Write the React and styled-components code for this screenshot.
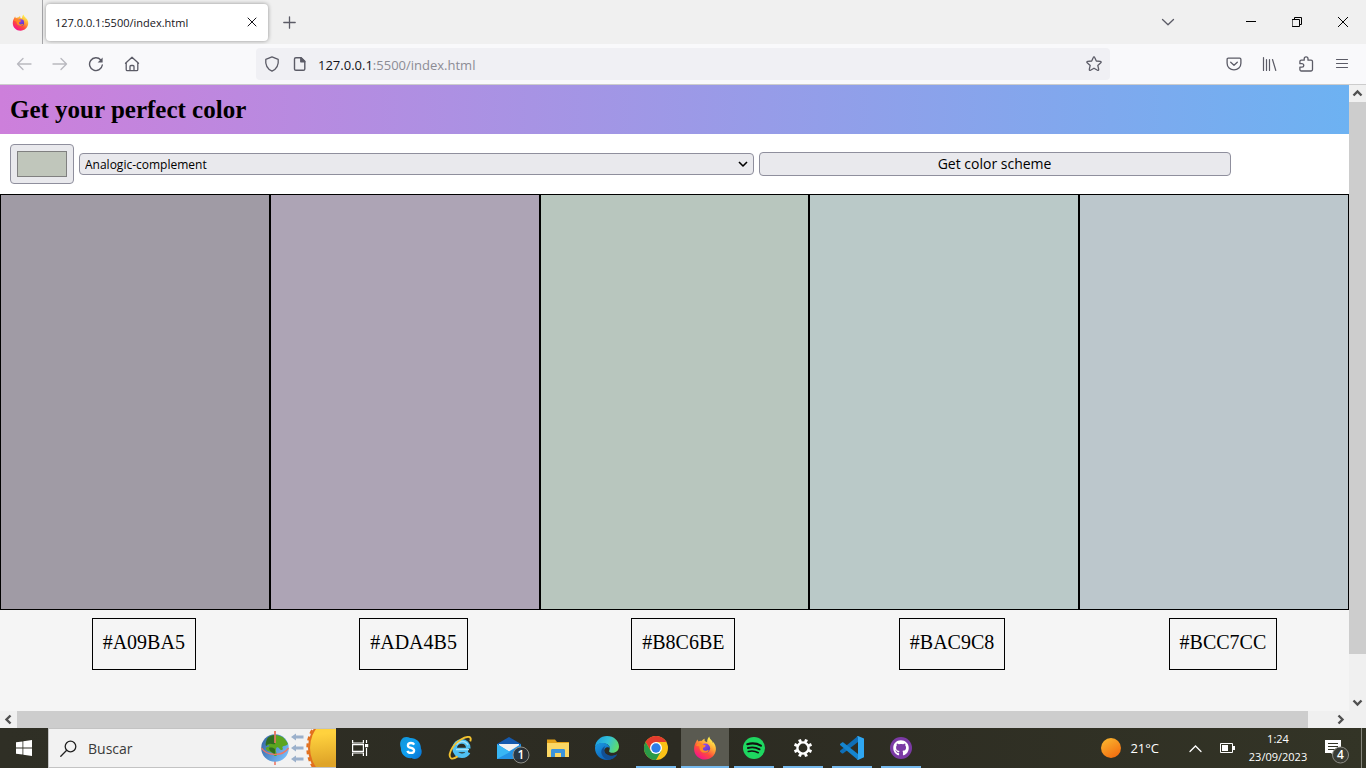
import React, { useState } from "react";
import styled, { createGlobalStyle } from "styled-components";
import { FaGithub } from "react-icons/fa";

const GlobalStyle = createGlobalStyle`
  * { box-sizing: border-box; }
  body { margin: 0; font-family: "Open Sans", "Noto Sans", sans-serif; color: #15141a; }
  button, input, select { font: inherit; color: inherit; margin: 0; }
  button { border: 0; padding: 0; background: none; }
  svg { display: block; flex: none; }
`;

const Screen = styled.div`
  min-height: 100vh;
  display: flex;
  flex-direction: column;
`;

/* ---------- browser window ---------- */

const TabStrip = styled.div`
  height: 44px;
  display: flex;
  align-items: center;
  background: #f0f0f0;
`;

const PinnedTab = styled.button`
  width: 43px;
  height: 44px;
  display: grid;
  place-items: center;
  padding-right: 2px;
  border-right: 1px solid #a5a5a8;
`;

const Tab = styled.div`
  width: 222px;
  height: 37px;
  margin: 0 3px;
  padding: 0 8px 0 9px;
  display: flex;
  align-items: center;
  justify-content: space-between;
  border-radius: 4px;
  background: #fff;
  box-shadow: 0 0 4px rgba(0, 0, 0, 0.4);
  font-size: 11px;
`;

const IconButton = styled.button`
  width: ${(p) => p.$w || 36}px;
  height: ${(p) => p.$h || 32}px;
  display: grid;
  place-items: center;
  color: ${(p) => p.$color || "#5b5b66"};
  opacity: ${(p) => (p.disabled ? 0.4 : 1)};
`;

const WindowButtons = styled.div`
  margin-left: auto;
  display: flex;
  align-items: center;
`;

const Gap = styled.div`
  width: 42px;
`;

const Toolbar = styled.nav`
  height: 41px;
  padding: 0 6px;
  display: flex;
  align-items: center;
  background: #f9f9fb;
  border-bottom: 1px solid #ccc;
`;

const ButtonGroup = styled.div`
  display: flex;
`;

const AddressBar = styled.div`
  flex: 1;
  height: 32px;
  margin: 0 106px;
  display: flex;
  align-items: center;
  border-radius: 4px;
  background: #f0f0f4;
`;

const Address = styled.div`
  flex: 1;
  margin-left: 6px;
  padding-top: 2px;
  font-size: 13px;
  color: #8c8c94;
  b { font-weight: 400; color: #15141a; }
`;

const Viewport = styled.div`
  flex: 1;
  display: grid;
  grid-template-columns: 1fr 17px;
  grid-template-rows: 1fr 17px;
`;

const Scrollbar = styled.div`
  display: flex;
  flex-direction: ${(p) => (p.$vertical ? "column" : "row")};
  background: #f0f0f0;
`;

const ScrollTrack = styled.div`
  flex: 1;
  display: flex;
  flex-direction: ${(p) => (p.$vertical ? "column" : "row")};
`;

const ScrollThumb = styled.div`
  flex: 0 0 ${(p) => p.$size};
  background: #cdcdcd;
`;

const ScrollCorner = styled.div`
  background: #f0f0f0;
`;

/* ---------- web page ---------- */

const Page = styled.main`
  min-width: 0;
  overflow: hidden;
  display: flex;
  flex-direction: column;
  background: #f5f5f5;
  font-family: "Liberation Serif", "Times New Roman", serif;
  color: #000;
`;

const PageHeader = styled.header`
  padding: 10px;
  background: linear-gradient(90deg, #cd7fdb, #6db2f2);
`;

const Title = styled.h1`
  margin: 0;
  font-size: 25px;
  line-height: 29px;
`;

const Controls = styled.form`
  display: flex;
  align-items: center;
  gap: 5px;
  padding: 10px 0;
  background: #fff;
  font-family: "Open Sans", "Noto Sans", sans-serif;
`;

const ColorInput = styled.input`
  appearance: none;
  width: 64px;
  height: 40px;
  margin-left: 10px;
  padding: 6px;
  border: 1px solid #8f8f9d;
  border-radius: 4px;
  background: #e9e9ed;
  &::-webkit-color-swatch-wrapper { padding: 0; }
  &::-webkit-color-swatch { border: 1px solid #808080; border-radius: 0; }
`;

const SelectWrap = styled.div`
  width: 50%;
  display: grid;
  align-items: center;
  > * { grid-area: 1 / 1; }
  > svg { justify-self: end; margin-right: 6px; pointer-events: none; }
`;

const SchemeSelect = styled.select`
  appearance: none;
  width: 100%;
  height: 22px;
  padding: 0 5px;
  border: 1px solid #8f8f9d;
  border-radius: 4px;
  background: #e9e9ed;
  font-size: 12px;
`;

const SchemeButton = styled.button`
  width: 35%;
  height: 24px;
  border: 1px solid #8f8f9d;
  border-radius: 4px;
  background: #e9e9ed;
  font-size: 14px;
  line-height: 22px;
`;

const Swatches = styled.section`
  height: 416px;
  display: flex;
`;

const Swatch = styled.div`
  flex: 1;
  border: 1px solid #000;
  background: ${(p) => p.$color};
`;

const Codes = styled.section`
  flex: none;
  box-sizing: content-box;
  width: 100%;
  padding: 8px 0 0 10px;
  display: flex;
  justify-content: space-around;
`;

const Code = styled.p`
  margin: 0;
  padding: 12px 10px 15px;
  border: 1px solid #000;
  font-size: 20px;
  line-height: 23px;
`;

/* ---------- taskbar ---------- */

const Taskbar = styled.footer`
  height: 40px;
  display: flex;
  align-items: center;
  background: linear-gradient(90deg, #2f2f25, #2c2b22 50%, #333426);
  color: #fff;
`;

const TaskButton = styled.button`
  position: relative;
  width: 48px;
  height: 40px;
  display: grid;
  place-items: center;
  background: ${(p) => (p.$active ? "#5a5a51" : "transparent")};
  &::after {
    content: "";
    display: ${(p) => (p.$running ? "block" : "none")};
    position: absolute;
    bottom: 0;
    left: ${(p) => (p.$active ? 0 : 4)}px;
    right: ${(p) => (p.$active ? 0 : 4)}px;
    height: 2px;
    background: #76b9ed;
  }
`;

const Search = styled.label`
  width: 288px;
  height: 40px;
  display: flex;
  align-items: center;
  border: 1px solid #c3c3c3;
  border-right: 0;
  background: #f2f2f2;
  color: #222;
  padding-left: 11px;
`;

const SearchInput = styled.input`
  flex: 1;
  min-width: 0;
  margin-left: 11px;
  padding: 0;
  border: 0;
  background: none;
  font-size: 14px;
  &::placeholder { color: #3a3a3a; opacity: 1; }
`;

const Apps = styled.div`
  display: flex;
  gap: 1px;
  margin-left: 3px;
`;

const Tray = styled.div`
  margin-left: auto;
  display: flex;
  align-items: center;
  height: 40px;
`;

const Weather = styled.button`
  display: flex;
  align-items: center;
  gap: 9px;
  margin-right: 20px;
  font-size: 13px;
`;

const Clock = styled.button`
  width: 70px;
  font-size: 11px;
  line-height: 18px;
  text-align: center;
`;

const ShowDesktop = styled.button`
  width: 5px;
  height: 40px;
  border-left: 1px solid #85857c;
`;

/* ---------- icons ---------- */

const Line = ({ size = 16, w = 1, children, ...rest }) => (
  <svg width={size} height={size} viewBox={`0 0 ${size} ${size}`} fill="none" stroke="currentColor"
    strokeWidth={w} strokeLinecap="round" strokeLinejoin="round" aria-hidden="true" {...rest}>
    {children}
  </svg>
);

const Firefox = ({ size, id }) => (
  <svg width={size} height={size} viewBox="0 0 24 24" aria-hidden="true">
    <defs>
      <linearGradient id={`${id}a`} x1="0.8" y1="0.1" x2="0.25" y2="0.95">
        <stop offset="0" stopColor="#fff44f" />
        <stop offset="0.35" stopColor="#ffa436" />
        <stop offset="0.65" stopColor="#ff4b3b" />
        <stop offset="1" stopColor="#f5128c" />
      </linearGradient>
      <linearGradient id={`${id}b`} x1="0" y1="0" x2="0.6" y2="1">
        <stop offset="0" stopColor="#a14df5" />
        <stop offset="1" stopColor="#5a37c8" />
      </linearGradient>
    </defs>
    <path d="M3.4 5.2C3.7 4.4 4 3.8 4.500 3.500c.1 1 .5 1.600 1.100 2.100 1-.7 2.100-.9 3.200-.7 1-1.200 1.800-1.700 3-2.100-.5 1.300-.3 2 .2 2.500.8.200 1.500.5 2.100.9C14.100 4.300 14.900 2 16.300.600c.2 1.700 1.100 2.800 2.400 4 .7.700 1 1.400 1.100 2.300l.5-.8c1.700 2.200 2.800 4.700 2.600 7.400C22.500 19.200 17.900 23.500 12 23.500 6 23.500 1.100 18.900 1.100 12.900c0-2.900.9-5.500 2.300-7.700z" fill={`url(#${id}a)`} />
    <circle cx="12.400" cy="12.200" r="4.700" fill={`url(#${id}b)`} />
    <path d="M2.800 10C4 7.600 6 6.600 8.600 7.200c1.300 1.600 2.600 1.700 4.200 2.200-.3 1.300-1.300 1.700-2.800 2.400-.5 1.800.7 3.100 2.400 3 1.300 0 2-.9 3.500-.4-1 1.900-2.900 2.700-4.900 2.300-3.300-.5-5-3.300-4.400-6.200-1.300-.7-2.600-.9-3.800-.5z" fill="#ff8a26" />
  </svg>
);

const Home = () => (
  <Line w={1.3}><path d="M1.500 7.200 8 1.200l6.500 6M2.200 6.800v6.700c0 .7.500 1.200 1.200 1.200h9.200c.7 0 1.200-.5 1.200-1.200V6.800M6 14.500v-4c0-.6.4-1 1-1h2c.6 0 1 .4 1 1v4" /></Line>
);
const Reload = () => (
  <Line w={1.4}>
    <path d="M14.300 9A6.400 6.400 0 1 1 12.800 4" />
    <path d="M14.600 1.500v5h-5z" fill="currentColor" stroke="none" />
  </Line>
);
const Shield = () => (
  <Line w={1.300}><path d="M8 .9 14.200 3.300c.6 4.800-1.300 9.400-6.200 11.900C3.100 12.700 1.200 8.100 1.800 3.300z" /></Line>
);
const Document = () => (
  <Line w={1.400}>
    <path d="M3.900 1.700h5.300l3.600 3.600v7.600c0 .8-.6 1.400-1.400 1.400H3.900c-.8 0-1.400-.6-1.400-1.400V3.100c0-.8.600-1.400 1.400-1.400z" />
    <path d="M8.800 1.700v4h4z" fill="currentColor" />
  </Line>
);
const Star = () => (
  <Line w={1.300}><path d="M8 .9c.4 0 .6.2.7.5l1.600 3.600 4 .4c.9.1 1.100.8.500 1.300l-3 2.700.9 4c.2.8-.5 1.300-1.200.9L8 12.200l-3.500 2.100c-.7.4-1.400-.1-1.200-.9l.9-4-3-2.700c-.6-.5-.4-1.200.5-1.300l4-.4L7.300 1.400c.1-.3.300-.5.700-.5z" /></Line>
);
const Pocket = () => (
  <Line w={1.300}>
    <path d="M2.300 2.200h11.400c.7 0 1.200.5 1.200 1.200v3.800c0 3.900-3 6.600-6.900 6.600S1.100 11.100 1.100 7.200V3.400c0-.7.5-1.200 1.200-1.200z" />
    <path d="m4.700 6.200 3.300 3 3.300-3" />
  </Line>
);
const Library = () => (
  <Line w={1.200}><path d="M1.500 1.500v13M4.500 3.500v11M7.500 3.500v11M10.500 3.500l3.300 11" /></Line>
);
const Puzzle = () => (
  <Line w={1.300}><path d="M6.200 4.200V2.800C6.200 1.700 7 .8 8.100.8s1.900.9 1.900 2v1.400h3.100c.8 0 1.400.6 1.400 1.400v8c0 .8-.6 1.400-1.400 1.400H3.300c-.8 0-1.400-.6-1.400-1.400v-2.500h2c1.100 0 1.900-.8 1.900-1.700s-.8-1.700-1.900-1.700h-2V5.600c0-.8.600-1.400 1.400-1.400z" /></Line>
);
const Chevron = ({ d }) => (
  <Line size={17} w={2.400} strokeLinecap="butt" strokeLinejoin="miter"><path d={d} stroke="#505050" /></Line>
);

const SeasonArt = () => (
  <svg width="76" height="38" viewBox="0 0 76 38" aria-hidden="true">
    <defs>
      <linearGradient id="sea" x1="0" y1="0" x2="1" y2="0.6">
        <stop offset="0" stopColor="#2f5f9e" />
        <stop offset="1" stopColor="#74b8f6" />
      </linearGradient>
      <linearGradient id="sunArt" x1="0" y1="0" x2="0.1" y2="1">
        <stop offset="0.3" stopColor="#ffd23e" />
        <stop offset="0.75" stopColor="#dfa428" />
      </linearGradient>
    </defs>
    <path d="M15 2v34" stroke="#ee7766" strokeWidth="1.600" />
    <circle cx="15" cy="19" r="13.800" fill="url(#sea)" />
    <path d="M7 10c3-4 8-5 13-3 4 1 6 4 8 8-1 1-3 2-4 2-2 0-2 2-1 3-1 2-3 1-4-1-1-1-3-1-3 1-1 2 1 4 1 6-1 2-3 1-4-1s-3-2-5-3-3-3-1-4c2 0 3-1 2-2-1 0-3 1-3-1 0-1 1-2 1-5z" fill="#5ba51f" />
    <path d="M7 10c2-3 5-4 8-4v9c-2 1-4-1-6 0-2 0-2 2-3 2-1-2 0-4 1-7z" fill="#2f6d22" />
    <path d="M9 19c2-1 5 0 6 1v6c-1 0-1-1-2-2-2-1-4-3-4-5z" fill="#2f6d22" />
    <path d="M1.500 19c5 8 21 9 27 0" fill="none" stroke="#ee7766" strokeWidth="1.400" />
    <path d="M15 2v12" stroke="#ee7766" strokeWidth="1.600" />
    {[7, 18, 29].map((y) => (
      <path key={y} d={`M31 ${y + 1}l5-3.500v2h7.500v3H36v2z`} fill="#9bb0cb" />
    ))}
    <circle cx="83" cy="19" r="35" fill="#e2701e" />
    <circle cx="83" cy="19" r="35.500" fill="none" stroke="#e2701e" strokeWidth="2.400" strokeDasharray="4 3" />
    <circle cx="83" cy="19" r="33" fill="url(#sunArt)" />
  </svg>
);

const TaskView = () => (
  <svg width="18" height="18" viewBox="0 0 18 18" fill="none" stroke="#fff" strokeWidth="1.200" aria-hidden="true">
    <path d="M1.600 1v3h10.800V1M1.600 17v-3h10.800v3M1.600 5.600h10.800v6.800H1.600zM15.500 1v3M15.500 9v8" />
    <path d="M14 5h3.200v3.200H14z" fill="#fff" stroke="none" />
  </svg>
);
const Skype = () => (
  <svg width="22" height="22" viewBox="0 0 22 22" aria-hidden="true">
    <defs><linearGradient id="sky" x1="0" y1="0" x2="1" y2="1"><stop offset="0" stopColor="#1396d8" /><stop offset="0.5" stopColor="#0e9ff0" /><stop offset="1" stopColor="#0a6ed0" /></linearGradient></defs>
    <path d="M6.300 0c1.500 0 2.700.4 3.800 1 5.900-.3 11 4.300 10.800 10.300 1.800 3.800.5 8-3.100 9.900-2.200 1.100-4.500 1-6.300-.1C5.300 21.600.6 16.800.9 10.900-1.200 6 1.200 0 6.300 0z" fill="url(#sky)" />
    <path d="M14.200 7.600C13.500 6.400 12.400 6 11 6 9.200 6 7.900 6.900 7.900 8.400c0 3.400 6.200 1.700 6.200 5 0 1.600-1.400 2.500-3.200 2.500-1.700 0-3-.7-3.500-2.100" fill="none" stroke="#fff" strokeWidth="2.300" />
  </svg>
);
const Explorer = () => (
  <svg width="24" height="24" viewBox="0 0 24 24" fill="none" aria-hidden="true">
    <path d="M20 14H9M20.300 12.500C20.300 8.200 17.500 5.400 13.800 5.400c-4 0-7.200 3-7.200 7.200 0 4.400 3.200 7.200 7.400 7.200 2.800 0 5-1.200 6.200-3.500" stroke="#4fc0f2" strokeWidth="4.600" />
    <path d="M8 13.500h13M8.500 8.500c2.500-4 9-4 11.500.5" stroke="#a5e2fa" strokeWidth="1.600" />
    <path d="M22.200 5.400c1-2.400.6-4-1-4.400C17 .2 8.800 5.200 4.700 11.200 1.400 16 .7 20.600 3 22.200c1.500.9 3.900.1 6.600-1.800" stroke="#f2c230" strokeWidth="1.900" />
  </svg>
);
const Mail = () => (
  <svg width="48" height="32" viewBox="0 0 48 32" aria-hidden="true">
    <path d="M12 12 24 5l12 7v15H12z" fill="#1459ad" />
    <path d="M14 12h20v9H14z" fill="#f1f1f1" />
    <path d="m12 12 12 7.500L36 12v15H12z" fill="#2493e4" />
    <path d="M12 27V12l13 8z" fill="#38b6f4" />
    <circle cx="36" cy="23" r="8" fill="#2b3136" fillOpacity="0.9" stroke="#8d8d86" />
    <text x="36" y="27" fill="#fff" fontSize="12" fontWeight="600" textAnchor="middle" fontFamily="Open Sans, sans-serif">1</text>
  </svg>
);
const Folder = () => (
  <svg width="22" height="20" viewBox="0 0 22 20" aria-hidden="true">
    <path d="M0 1.500h8l2 2.500h12v15H0z" fill="#e2a017" />
    <path d="M0 5h22v14H0z" fill="#fbd764" />
    <path d="M4 19v-6.500c0-1 .5-1.500 1.500-1.500h11c1 0 1.500.5 1.500 1.500V19h-4v-4H8v4z" fill="#3b94dc" />
  </svg>
);
const Edge = () => (
  <svg width="24" height="24" viewBox="0 0 24 24" aria-hidden="true">
    <defs>
      <linearGradient id="edgeTop" x1="0" y1="0.3" x2="1" y2="0.6"><stop offset="0" stopColor="#1b9fe0" /><stop offset="0.5" stopColor="#33c1d8" /><stop offset="1" stopColor="#62de63" /></linearGradient>
      <linearGradient id="edgeLow" x1="0" y1="0" x2="0.8" y2="1"><stop offset="0" stopColor="#1b9be3" /><stop offset="1" stopColor="#0a55ad" /></linearGradient>
    </defs>
    <path d="M0 11C.6 4.700 5.600 0 12 0c7 0 12 5 12 10.500 0 3.800-2.900 6.300-6.300 6.300-2.300 0-4-.8-3.500-1.900C16.500 10 12 7.300 8 7.300 4 7.300 1.200 9 0 11z" fill="url(#edgeTop)" />
    <path d="M0 12C0 8.500 4 6.800 7.800 6.900c3.500.1 6.700 2 7.100 5-3-1.800-6.300.8-5.600 3.600.8 3.500 5 5.200 9.200 4.200 1.600-.4 2.700-1 3.600-1.400C20 21.700 16.400 24 12 24 5.300 24 0 18.700 0 12z" fill="url(#edgeLow)" />
    <path d="M10.300 10.300c-3.500 1.300-5 5.200-3.300 8.600 1.200 2.500 3.700 4.400 6.500 5 3.700-.3 6.800-2.300 8.600-5.300-5.200 2.600-11.500.8-12.800-3.300-.5-1.900-.1-3.600 1-5z" fill="#124f93" />
  </svg>
);
const Chrome = () => (
  <svg width="24" height="24" viewBox="0 0 24 24" aria-hidden="true">
    <circle cx="12" cy="12" r="12" fill="#fbc116" />
    <path d="M1.600 6A12 12 0 0 1 22.400 6H12L6.800 15z" fill="#e33b2e" />
    <path d="M1.600 6A12 12 0 0 0 12 24l5.200-9-10.400 0z" fill="#2a9a48" />
    <circle cx="12" cy="12" r="6" fill="#fff" />
    <circle cx="12" cy="12" r="4.700" fill="#2d7de9" />
  </svg>
);
const Spotify = () => (
  <svg width="22" height="22" viewBox="0 0 22 22" fill="none" stroke="#111" strokeLinecap="round" aria-hidden="true">
    <circle cx="11" cy="11" r="11" fill="#1ed760" stroke="none" />
    <path d="M4.300 7.200c4.600-1.300 9.500-.9 13.600 1.400" strokeWidth="2.200" />
    <path d="M4.900 11c4-1.100 8.100-.6 11.700 1.300" strokeWidth="1.900" />
    <path d="M5.300 14.500c3.400-.8 6.900-.5 10 1.200" strokeWidth="1.600" />
  </svg>
);
const Gear = () => (
  <svg width="20" height="20" viewBox="0 0 20 20" fill="none" stroke="#fff" aria-hidden="true">
    <circle cx="10" cy="10" r="5.600" strokeWidth="2.400" />
    {[22.5, 67.5, 112.5, 157.5, 202.5, 247.5, 292.5, 337.5].map((a) => (
      <path key={a} d="M10 .8v3" strokeWidth="3" transform={`rotate(${a} 10 10)`} />
    ))}
  </svg>
);
const VsCode = () => (
  <svg width="24" height="24" viewBox="0 0 24 24" aria-hidden="true">
    <path d="M18 0 0 14.800c-.2.500 0 1 .3 1.300l1.700 1.300c.5.300 1 .2 1.400-.1L18 6z" fill="#0f6fb8" />
    <path d="M18 24 0 9c-.2-.5 0-1 .3-1.300L2 6.400c.5-.3 1-.2 1.400.1L18 18z" fill="#1585cf" />
    <path d="M18 0l6 2.600v18.700L18 24l-1.400-.8c.9.300 1.400-.2 1.400-1V1.800c0-.8-.5-1.300-1.400-1z" fill="#2fa7f2" />
  </svg>
);
const GithubDisc = styled.span`
  width: 22px;
  height: 22px;
  display: grid;
  place-items: center;
  border-radius: 50%;
  background: #7b3aa5;
  color: #fff;
`;
const Notifications = () => (
  <svg width="26" height="32" viewBox="0 0 26 32" aria-hidden="true">
    <path d="M1 8h16v13h-6v4l-4-4H1z" fill="#fff" />
    <path d="M4 11.500h10M4 14.500h10M4 17.500h7" stroke="#333426" />
    <circle cx="16.500" cy="23" r="8" fill="#3b3c34" stroke="#8d8d86" />
    <text x="16.500" y="27" fill="#fff" fontSize="12" fontWeight="600" textAnchor="middle" fontFamily="Open Sans, sans-serif">4</text>
  </svg>
);

const scheme = ["#A09BA5", "#ADA4B5", "#B8C6BE", "#BAC9C8", "#BCC7CC"];
const modes = ["Monochrome", "Monochrome-dark", "Monochrome-light", "Analogic", "Complement", "Analogic-complement", "Triad", "Quad"];

const apps = [
  { name: "Skype", icon: <Skype /> },
  { name: "Internet Explorer", icon: <Explorer /> },
  { name: "Mail", icon: <Mail /> },
  { name: "File Explorer", icon: <Folder /> },
  { name: "Edge", icon: <Edge /> },
  { name: "Chrome", icon: <Chrome />, running: true },
  { name: "Firefox", icon: <Firefox size={24} id="task" />, running: true, active: true },
  { name: "Spotify", icon: <Spotify />, running: true },
  { name: "Settings", icon: <Gear />, running: true },
  { name: "Visual Studio Code", icon: <VsCode />, running: true },
  { name: "GitHub Desktop", icon: <GithubDisc><FaGithub size={16} /></GithubDisc>, running: true },
];

export default function App() {
  const [seed, setSeed] = useState("#c0c6bb");
  const [mode, setMode] = useState("Analogic-complement");

  return (
    <Screen>
      <GlobalStyle />
      <TabStrip>
        <PinnedTab aria-label="Firefox View"><Firefox size={17} id="tab" /></PinnedTab>
        <Tab>
          127.0.0.1:5500/index.html
          <IconButton $w={16} $h={16} $color="#15141a" aria-label="Close tab">
            <Line size={10}><path d="m1 1 8 8M9 1 1 9" /></Line>
          </IconButton>
        </Tab>
        <IconButton aria-label="New tab"><Line size={13} w={1.3}><path d="M6.500.8v11.400M.8 6.500h11.400" /></Line></IconButton>
        <WindowButtons>
          <IconButton aria-label="List all tabs"><Line size={14} w={1.3}><path d="m1.500 4.500 5.500 5.300 5.500-5.300" /></Line></IconButton>
          <Gap />
          <IconButton $w={46} $color="#000" aria-label="Minimize"><Line size={10} strokeLinecap="butt"><path d="M0 4.500h10" /></Line></IconButton>
          <IconButton $w={46} $color="#000" aria-label="Restore">
            <Line size={10} strokeLinejoin="miter"><path d="M.5 2.500h7v7h-7zM2.500 2.500v-2h7v7h-2" /></Line>
          </IconButton>
          <IconButton $w={46} $color="#000" aria-label="Close"><Line size={10}><path d="m.3.300 9.400 9.400M9.700.3.300 9.700" /></Line></IconButton>
        </WindowButtons>
      </TabStrip>

      <Toolbar>
        <ButtonGroup>
          <IconButton disabled aria-label="Back"><Line w={1.3}><path d="M15 8H1.500M7 2.500 1.500 8 7 13.500" /></Line></IconButton>
          <IconButton disabled aria-label="Forward"><Line w={1.3}><path d="M1 8h13.500M9 2.500 14.500 8 9 13.500" /></Line></IconButton>
          <IconButton aria-label="Reload"><Reload /></IconButton>
          <IconButton aria-label="Home"><Home /></IconButton>
        </ButtonGroup>
        <AddressBar>
          <IconButton $w={32} aria-label="Tracking protection"><Shield /></IconButton>
          <IconButton $w={24} aria-label="Site information"><Document /></IconButton>
          <Address><b>127.0.0.1</b>:5500/index.html</Address>
          <IconButton $w={32} aria-label="Bookmark this page"><Star /></IconButton>
        </AddressBar>
        <ButtonGroup>
          <IconButton aria-label="Pocket"><Pocket /></IconButton>
          <IconButton aria-label="Library"><Library /></IconButton>
          <IconButton aria-label="Extensions"><Puzzle /></IconButton>
          <IconButton aria-label="Menu"><Line w={1.2}><path d="M2.500 3.500h11M2.500 7.500h11M2.500 11.500h11" /></Line></IconButton>
        </ButtonGroup>
      </Toolbar>

      <Viewport>
        <Page>
          <PageHeader><Title>Get your perfect color</Title></PageHeader>
          <Controls onSubmit={(e) => e.preventDefault()}>
            <ColorInput type="color" aria-label="Seed color" value={seed} onChange={(e) => setSeed(e.target.value)} />
            <SelectWrap>
              <SchemeSelect aria-label="Scheme mode" value={mode} onChange={(e) => setMode(e.target.value)}>
                {modes.map((m) => <option key={m}>{m}</option>)}
              </SchemeSelect>
              <Line size={10} w={1.6} strokeLinecap="butt"><path d="m1 3 4 4 4-4" /></Line>
            </SelectWrap>
            <SchemeButton>Get color scheme</SchemeButton>
          </Controls>
          <Swatches>{scheme.map((c) => <Swatch key={c} $color={c} />)}</Swatches>
          <Codes>{scheme.map((c) => <Code key={c}>{c}</Code>)}</Codes>
        </Page>
        <Scrollbar $vertical>
          <Chevron d="m4.500 10.500 4-4 4 4" />
          <ScrollTrack $vertical><ScrollThumb $size="93.3%" /></ScrollTrack>
          <Chevron d="m4.500 6.500 4 4 4-4" />
        </Scrollbar>
        <Scrollbar>
          <Chevron d="m10.500 4.500-4 4 4 4" />
          <ScrollTrack><ScrollThumb $size="98.2%" /></ScrollTrack>
          <Chevron d="m6.500 4.500 4 4-4 4" />
        </Scrollbar>
        <ScrollCorner />
      </Viewport>

      <Taskbar>
        <TaskButton aria-label="Start">
          <svg width="16" height="16" viewBox="0 0 16 16" fill="#fff" aria-hidden="true">
            <path d="M0 2.300 6.500 1.400v6.200H0zM7.300 1.300 16 0v7.600H7.300zM0 8.400h6.500v6.200L0 13.700zM7.300 8.400H16V16l-8.700-1.300z" />
          </svg>
        </TaskButton>
        <Search>
          <Line size={17} w={1.3}><circle cx="10.500" cy="6.500" r="5.300" /><path d="M6.700 10.300.8 16.200" /></Line>
          <SearchInput placeholder="Buscar" aria-label="Buscar" />
          <SeasonArt />
        </Search>
        <TaskButton aria-label="Task view"><TaskView /></TaskButton>
        <Apps>
          {apps.map((a) => (
            <TaskButton key={a.name} aria-label={a.name} $running={a.running} $active={a.active}>{a.icon}</TaskButton>
          ))}
        </Apps>
        <Tray>
          <Weather>
            <svg width="20" height="20" viewBox="0 0 20 20" aria-hidden="true">
              <defs><linearGradient id="sun" x1="0.2" y1="0" x2="0.8" y2="1"><stop offset="0" stopColor="#f9b52f" /><stop offset="1" stopColor="#f26a0e" /></linearGradient></defs>
              <circle cx="10" cy="10" r="10" fill="url(#sun)" />
            </svg>
            21°C
          </Weather>
          <IconButton $w={32} $color="#fff" aria-label="Show hidden icons"><Line size={13} w={1.3} strokeLinejoin="miter"><path d="M1 9.500 6.500 4 12 9.500" /></Line></IconButton>
          <IconButton $w={32} $color="#fff" aria-label="Battery">
            <svg width="16" height="10" viewBox="0 0 16 10" aria-hidden="true">
              <path d="M1.500.500h12v9h-12z" fill="none" stroke="#fff" />
              <path d="M3 2h6v6H3zM14 3h2v4h-2z" fill="#fff" />
            </svg>
          </IconButton>
          <Clock>1:24<br />23/09/2023</Clock>
          <IconButton $w={48} $h={40} aria-label="Notifications"><Notifications /></IconButton>
          <ShowDesktop aria-label="Show desktop" />
        </Tray>
      </Taskbar>
    </Screen>
  );
}
